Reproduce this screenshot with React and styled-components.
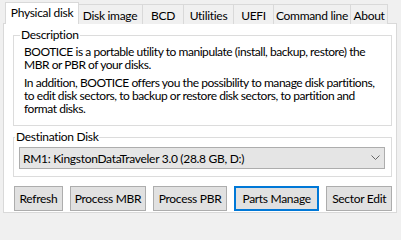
import React from "react";
import styled, { createGlobalStyle } from "styled-components";

const GlobalStyle = createGlobalStyle`
  html, body {
    margin: 0;
    padding: 0;
    background: #f0f0f0;
  }
  * {
    box-sizing: border-box;
  }
`;

const Window = styled.div`
  width: 401px;
  height: 216px;
  padding: 2px 4px 0 3px;
  background: #f0f0f0;
  font-family: "Segoe UI", Lato, sans-serif;
  font-size: 12px;
  letter-spacing: -0.3px;
  color: #000;
  overflow: hidden;
`;

const TabStrip = styled.div`
  display: flex;
  align-items: flex-end;
  height: 22px;
  padding-left: 4px;
`;

const Tab = styled.div`
  display: flex;
  align-items: center;
  justify-content: center;
  white-space: nowrap;
  width: ${(p) => p.$w}px;
  height: ${(p) => (p.$active ? 22 : 20)}px;
  padding-top: ${(p) => (p.$active ? 0 : 2)}px;
  padding-bottom: ${(p) => (p.$active ? 2 : 0)}px;
  margin: ${(p) => (p.$active ? "0 -2px" : "0")};
  background: ${(p) => (p.$active ? "#fff" : "#f0f0f0")};
  border: 1px solid #d9d9d9;
  border-bottom: none;
  border-right: ${(p) => (p.$active || p.$last ? "1px solid #d9d9d9" : "none")};
  position: ${(p) => (p.$active ? "relative" : "static")};
  z-index: ${(p) => (p.$active ? 1 : "auto")};
`;

const Panel = styled.div`
  margin-top: -1px;
  height: 190px;
  background: #fff;
  border: 1px solid #d9d9d9;
  padding: 4px 4px 0 9px;
`;

const Group = styled.fieldset`
  margin: 0 0 ${(p) => p.$gap || 0}px 0;
  padding: ${(p) => p.$pad};
  border: 1px solid #dcdcdc;
  min-width: 0;
`;

const Legend = styled.legend`
  margin-left: -4px;
  padding: 0 1px;
  line-height: 14px;
`;

const Para = styled.p`
  margin: 0 0 ${(p) => p.$gap || 0}px 0;
  line-height: 13px;
  letter-spacing: -0.45px;
  white-space: nowrap;
`;

const Combo = styled.div`
  display: flex;
  align-items: center;
  justify-content: space-between;
  height: 22px;
  padding: 0 4px 0 3px;
  background: #e5e5e5;
  border: 1px solid #adadad;
`;

const Chevron = styled.svg`
  width: 9px;
  height: 6px;
`;

const ButtonRow = styled.div`
  display: flex;
  gap: 7px;
  margin-top: 9px;
  padding-left: 1px;
`;

const Button = styled.button`
  width: ${(p) => p.$w}px;
  height: 25px;
  padding: 0;
  font: inherit;
  letter-spacing: inherit;
  color: #000;
  background: #e1e1e1;
  border: ${(p) => (p.$focus ? "2px solid #0078d7" : "1px solid #adadad")};
  white-space: nowrap;
`;

const tabs = [
  { label: "Physical disk", w: 74, active: true },
  { label: "Disk  image", w: 65 },
  { label: "BCD", w: 41 },
  { label: "Utilities", w: 50 },
  { label: "UEFI", w: 40 },
  { label: "Command line", w: 77 },
  { label: "About", w: 38, last: true },
];

const buttons = [
  { label: "Refresh", w: 49 },
  { label: "Process MBR", w: 77 },
  { label: "Process PBR", w: 74 },
  { label: "Parts Manage", w: 86, focus: true },
  { label: "Sector Edit", w: 66 },
];

export default function App() {
  return (
    <>
      <GlobalStyle />
      <Window>
        <TabStrip>
          {tabs.map((t) => (
            <Tab key={t.label} $w={t.w} $active={t.active} $last={t.last}>
              {t.label}
            </Tab>
          ))}
        </TabStrip>
        <Panel>
          <Group $pad="3px 10px 10px 10px" $gap={4}>
            <Legend>Description</Legend>
            <Para $gap={5}>
              BOOTICE is a portable utility to manipulate (install, backup, restore) the
              <br />
              MBR or PBR of your disks.
            </Para>
            <Para>
              In addition, BOOTICE offers you the possibility to manage disk partitions,
              <br />
              to edit disk sectors, to backup or restore disk sectors, to partition and
              <br />
              format disks.
            </Para>
          </Group>
          <Group $pad="3px 6px 7px 5px">
            <Legend>Destination Disk</Legend>
            <Combo>
              <span>RM1: KingstonDataTraveler 3.0 (28.8 GB, D:)</span>
              <Chevron viewBox="0 0 9 6">
                <path d="M0.5 0.5 L4.5 4.5 L8.5 0.5" fill="none" stroke="#666" strokeWidth="1" />
              </Chevron>
            </Combo>
          </Group>
          <ButtonRow>
            {buttons.map((b) => (
              <Button key={b.label} $w={b.w} $focus={b.focus}>
                {b.label}
              </Button>
            ))}
          </ButtonRow>
        </Panel>
      </Window>
    </>
  );
}
